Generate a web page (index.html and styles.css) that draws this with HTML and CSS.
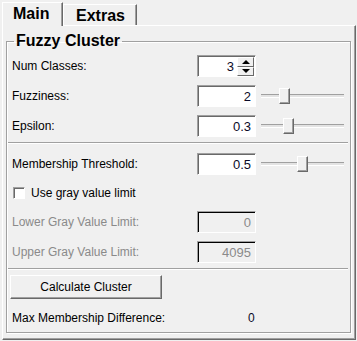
FILE: index.html
```html
<!DOCTYPE html>
<html lang="en">

<head>
    <meta charset="UTF-8">
    <meta name="viewport" content="width=device-width, initial-scale=1.0">
    <title>Fuzzy Cluster</title>
    <link rel="stylesheet" href="styles.css">
</head>

<body>
    <div class="tabs">
        <div class="tab active">Main</div>
        <div class="tab">Extras</div>
    </div>
    <div class="panel">
        <fieldset class="group">
            <legend>Fuzzy Cluster</legend>

            <div class="row">
                <span class="label">Num Classes:</span>
                <div class="field spin">
                    <span class="value">3</span>
                    <div class="spin-buttons">
                        <div class="spin-btn"><span class="arrow up"></span></div>
                        <div class="spin-btn"><span class="arrow down"></span></div>
                    </div>
                </div>
            </div>

            <div class="row">
                <span class="label">Fuzziness:</span>
                <div class="field"><span class="value">2</span></div>
                <div class="slider"><div class="track"></div><div class="thumb" style="left: 18px"></div></div>
            </div>

            <div class="row">
                <span class="label">Epsilon:</span>
                <div class="field"><span class="value">0.3</span></div>
                <div class="slider"><div class="track"></div><div class="thumb" style="left: 22px"></div></div>
            </div>

            <div class="separator"></div>

            <div class="row">
                <span class="label">Membership Threshold:</span>
                <div class="field"><span class="value">0.5</span></div>
                <div class="slider"><div class="track"></div><div class="thumb" style="left: 36px"></div></div>
            </div>

            <div class="check-row">
                <span class="checkbox"></span>
                <span>Use gray value limit</span>
            </div>

            <div class="row disabled">
                <span class="label">Lower Gray Value Limit:</span>
                <div class="field"><span class="value">0</span></div>
            </div>

            <div class="row disabled">
                <span class="label">Upper Gray Value Limit:</span>
                <div class="field"><span class="value">4095</span></div>
            </div>

            <div class="separator"></div>

            <button class="calc">Calculate Cluster</button>

            <div class="result">
                <span class="label">Max Membership Difference:</span>
                <span class="result-value">0</span>
            </div>
        </fieldset>
    </div>
</body>

</html>
```

FILE: styles.css
```css
body {
    margin: 0;
    background-color: #f0f0f0;
    font-family: "Liberation Sans", Arial, sans-serif;
    font-size: 12px;
    color: #000;
    width: 357px;
    height: 341px;
    overflow: hidden;
}
.tabs {
    display: flex;
    align-items: flex-end;
    padding: 2px 0 0 2px;
    height: 23px;
    position: relative;
    z-index: 1;
}
.tab {
    font-size: 16px;
    font-weight: bold;
    background-color: #f0f0f0;
    border-left: 1px solid #fff;
    border-top: 1px solid #fff;
    border-right: 1px solid #696969;
    box-shadow: inset -1px 0 0 #a0a0a0;
    height: 21px;
    width: 74px;
    padding-left: 12px;
    box-sizing: border-box;
    line-height: 21px;
}
.tab.active {
    width: 61px;
    height: 24px;
    padding-left: 10px;
    line-height: 22px;
    margin-bottom: -1px;
}
.panel {
    margin-left: 2px;
    width: 354px;
    height: 315px;
    box-sizing: border-box;
    border-left: 1px solid #fff;
    border-top: 1px solid #fff;
    border-right: 1px solid #696969;
    border-bottom: 1px solid #696969;
    box-shadow: inset -1px -1px 0 #a0a0a0;
    padding: 6px 4px 6px 3px;
}
.group {
    margin: 0;
    height: 100%;
    box-sizing: border-box;
    border: 1px solid #a0a0a0;
    box-shadow: 1px 1px 0 #fff, inset 1px 1px 0 #fff;
    padding: 1px 5px 0 5px;
    min-width: 0;
}
.group legend {
    font-size: 16px;
    font-weight: bold;
    line-height: 18px;
    padding: 0 2px;
    margin-left: 2px;
}
.row {
    display: grid;
    grid-template-columns: 180px 59px 83px;
    column-gap: 5px;
    align-items: center;
    height: 30px;
}
.field {
    position: relative;
    height: 22px;
    box-sizing: border-box;
    background-color: #fff;
    border-top: 1px solid #a0a0a0;
    border-left: 1px solid #a0a0a0;
    border-right: 1px solid #fff;
    border-bottom: 1px solid #fff;
    box-shadow: inset 1px 1px 0 #696969;
    display: flex;
    align-items: center;
    justify-content: flex-end;
    padding-right: 4px;
    font-size: 13px;
}
.value {
    color: #0a0a28;
}
.spin {
    padding-right: 21px;
}
.spin-buttons {
    position: absolute;
    right: 1px;
    top: 1px;
    width: 17px;
    height: 19px;
    display: flex;
    flex-direction: column;
}
.spin-btn {
    flex: 1;
    background-color: #f0f0f0;
    border-top: 1px solid #fff;
    border-left: 1px solid #fff;
    border-right: 1px solid #696969;
    border-bottom: 1px solid #696969;
    display: flex;
    align-items: center;
    justify-content: center;
}
.arrow {
    width: 0;
    height: 0;
    border-left: 4px solid transparent;
    border-right: 4px solid transparent;
}
.arrow.up {
    border-bottom: 4px solid #000;
}
.arrow.down {
    border-top: 4px solid #000;
}
.slider {
    position: relative;
    height: 22px;
}
.track {
    position: absolute;
    left: 0;
    right: 0;
    top: 9px;
    height: 2px;
    border-top: 1px solid #a0a0a0;
    border-bottom: 1px solid #fff;
    background-color: #e3e3e3;
}
.thumb {
    position: absolute;
    top: 3px;
    width: 11px;
    height: 16px;
    box-sizing: border-box;
    background-color: #f0f0f0;
    border-top: 1px solid #fff;
    border-left: 1px solid #fff;
    border-right: 1px solid #696969;
    border-bottom: 1px solid #696969;
    box-shadow: inset -1px -1px 0 #a0a0a0;
}
.separator {
    height: 0;
    border-top: 1px solid #a0a0a0;
    border-bottom: 1px solid #fff;
    margin: 1px -3px 5px -4px;
}
.check-row {
    display: flex;
    align-items: center;
    gap: 6px;
    height: 29px;
    margin-top: -1px;
    padding-left: 1px;
}
.checkbox {
    width: 12px;
    height: 12px;
    box-sizing: border-box;
    background-color: #fff;
    border-top: 1px solid #a0a0a0;
    border-left: 1px solid #a0a0a0;
    border-right: 1px solid #fff;
    border-bottom: 1px solid #fff;
    box-shadow: inset 1px 1px 0 #696969;
}
.disabled {
    color: #8a8a8a;
}
.disabled .field {
    background-color: #f0f0f0;
    box-shadow: inset 1px 1px 0 #000;
}
.disabled .value {
    color: #8a8a8a;
}
.calc {
    display: block;
    margin: 0 0 0 -2px;
    width: 152px;
    height: 24px;
    font-family: "Liberation Sans", Arial, sans-serif;
    font-size: 12px;
    color: #000;
    background-color: #f0f0f0;
    border-top: 1px solid #fff;
    border-left: 1px solid #fff;
    border-right: 1px solid #696969;
    border-bottom: 1px solid #696969;
    box-shadow: inset -1px -1px 0 #a0a0a0;
    padding: 0;
}
.result {
    display: flex;
    align-items: center;
    height: 18px;
    margin-top: 10px;
}
.result .label {
    width: 236px;
}
.result-value {
    color: #0a0a28;
}
```
